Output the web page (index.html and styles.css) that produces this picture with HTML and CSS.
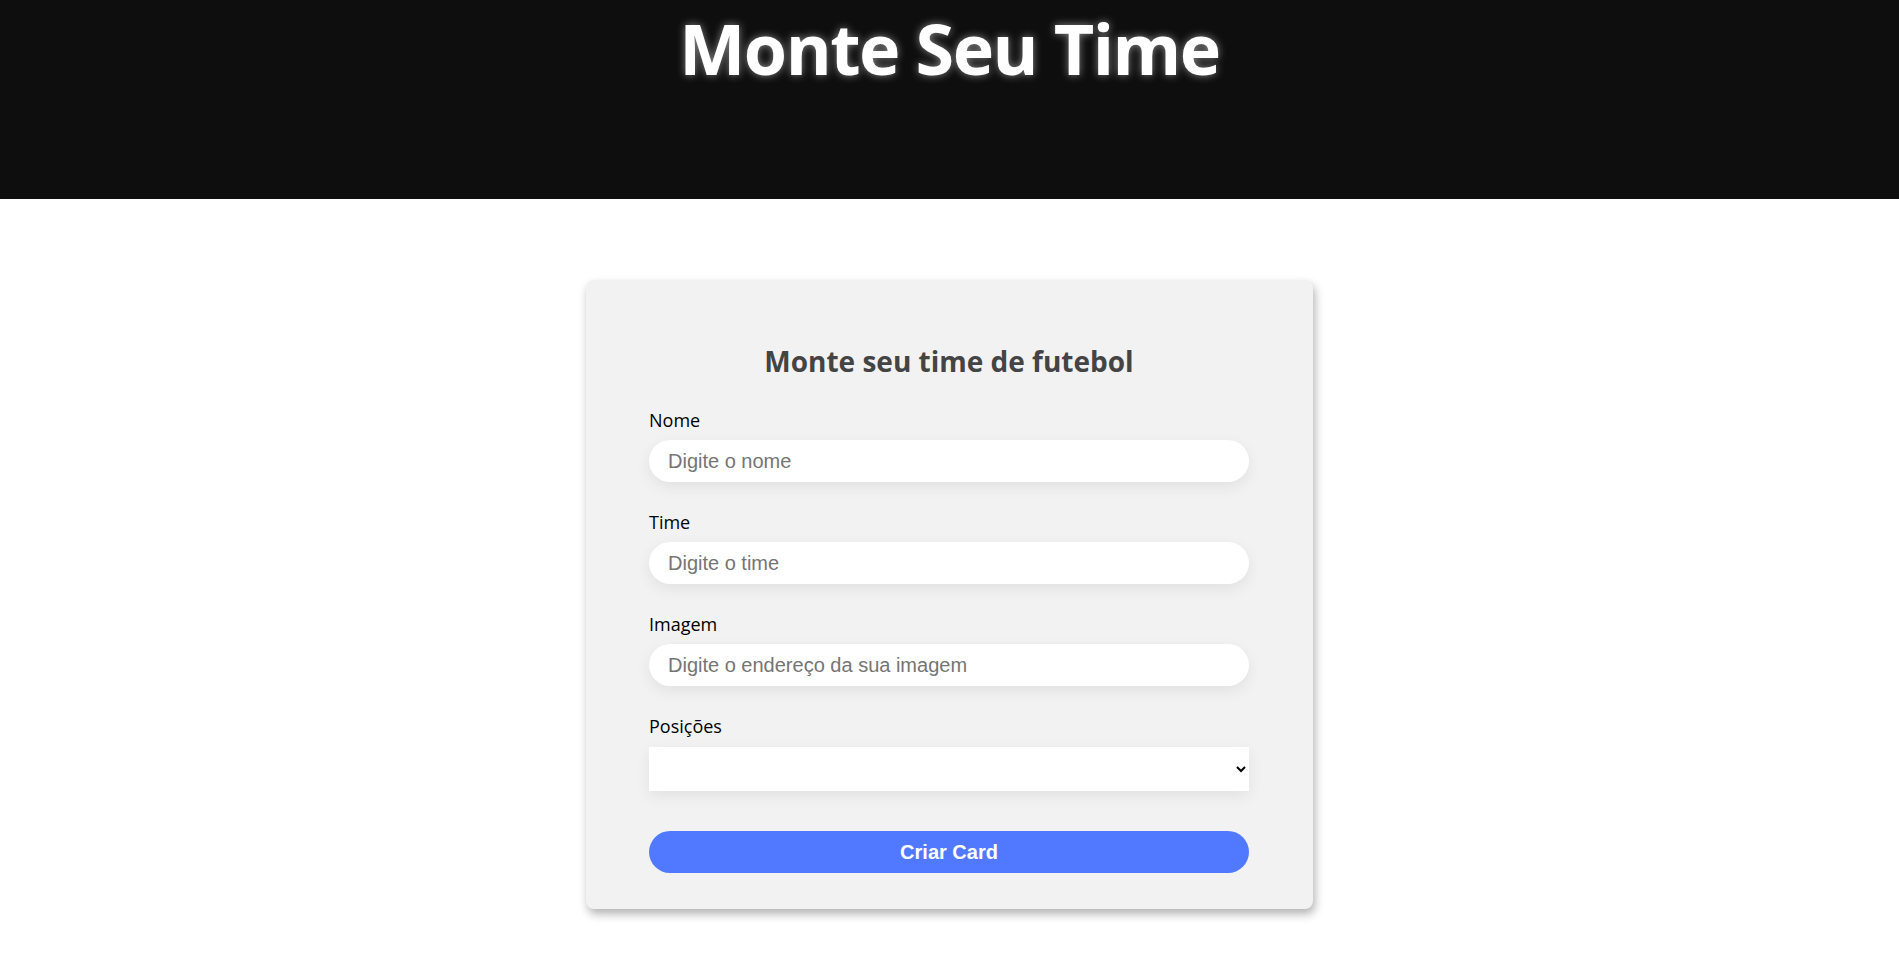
FILE: index.html
```html
<!doctype html>
<html lang="pt-BR">
<head>
	<meta charset="utf-8">
	<title>Monte Seu Time</title>
	<link rel="stylesheet" href="styles.css">
</head>
<body>
	<header class="topo">
		<h1>Monte Seu Time</h1>
	</header>

	<main>
		<form class="cartao" id="formTime">
			<h2>Monte seu time de futebol</h2>

			<div class="campo">
				<label for="nome">Nome</label>
				<input type="text" id="nome" name="nome" placeholder="Digite o nome">
			</div>
			<div class="campo">
				<label for="time">Time</label>
				<input type="text" id="time" name="time" placeholder="Digite o time">
			</div>
			<div class="campo">
				<label for="imagem">Imagem</label>
				<input type="text" id="imagem" name="imagem" placeholder="Digite o endereço da sua imagem">
			</div>
			<div class="campo">
				<label for="posicoes">Posições</label>
				<select id="posicoes" name="posicoes">
					<option value=""></option>
					<option value="goleiro">Goleiro</option>
					<option value="zagueiro">Zagueiro</option>
					<option value="meio">Meio-campo</option>
					<option value="atacante">Atacante</option>
				</select>
			</div>

			<button type="submit">Criar Card</button>
		</form>
	</main>
</body>
</html>
```

FILE: styles.css
```css
* {
	box-sizing: border-box;
}
body {
	margin: 0;
	background: #fff;
	font-family: "Open Sans", "Noto Sans", sans-serif;
}
.topo {
	height: 199px;
	background: #0e0e0e;
	text-align: center;
	padding-top: 13px;
}
.topo h1 {
	margin: 0;
	font-size: 70px;
	line-height: 1;
	letter-spacing: -1.5px;
	color: #fff;
	text-shadow: 0 0 8px rgba(255, 255, 255, 0.5);
}
.cartao {
	width: 727px;
	margin: 81px auto 40px;
	padding: 64px 64px 36px 63px;
	background: #f2f2f2;
	border-radius: 8px;
	box-shadow: 2px 5px 10px rgba(0, 0, 0, 0.3);
}
.cartao h2 {
	margin: 0 0 29px;
	text-align: center;
	font-size: 28px;
	line-height: 34px;
	color: #444;
}
.campo {
	display: flex;
	flex-direction: column;
	gap: 7px;
}
.campo + .campo {
	margin-top: 27px;
}
label {
	font-size: 18px;
	line-height: 26px;
	color: #000;
}
input {
	height: 42px;
	width: 100%;
	border: none;
	border-radius: 21px;
	padding: 0 19px;
	background: #fff;
	font-family: "Liberation Sans", Arial, sans-serif;
	font-size: 20px;
	color: #222;
	box-shadow: 0 5px 15px rgba(0, 0, 0, 0.07);
	outline: none;
}
input::placeholder {
	color: #757575;
}
select {
	height: 44px;
	width: 100%;
	margin-top: 1px;
	border: none;
	border-radius: 0;
	background: #fff;
	font-size: 18px;
	box-shadow: 0 5px 15px rgba(0, 0, 0, 0.07);
}
button {
	display: block;
	width: 100%;
	height: 42px;
	margin-top: 40px;
	border: none;
	border-radius: 21px;
	background: #5179ff;
	color: #fff;
	font-family: "Liberation Sans", Arial, sans-serif;
	font-weight: bold;
	font-size: 20px;
	cursor: pointer;
}
```
